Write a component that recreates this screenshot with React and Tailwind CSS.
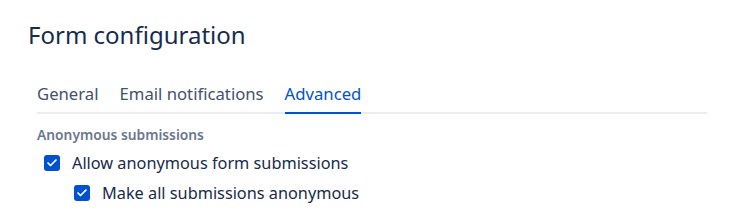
import { Check } from 'lucide-react';

const tabs = ['General', 'Email notifications', 'Advanced'];

const Checkbox = ({ label, className = '' }) => (
  <label className={`flex items-center h-[30px] ${className}`}>
    <span className="flex items-center justify-center w-4 h-4 rounded-[3px] bg-[#0052cc]">
      <Check size={12} strokeWidth={3.5} className="text-white" />
    </span>
    <span className="ml-[12px] text-[16.3px] text-[#172b4d]">{label}</span>
  </label>
);

const App = () => {
  return (
    <div className="w-[737px] h-[214px] bg-white pl-[28px] pt-[19px] font-['Noto_Sans',sans-serif]">
      <h1 className="text-[24px] leading-[32px] text-[#172b4d]">Form configuration</h1>

      <div className="ml-[9px] mt-[31px] w-[670px] border-b-2 border-[#ebecf0] flex gap-[21px]">
        {tabs.map((t, i) => (
          <div
            key={t}
            className={`relative pb-[6px] text-[16.7px] leading-[24px] ${
              i === 2 ? 'text-[#0052cc]' : 'text-[#42526e]'
            }`}
          >
            {t}
            {i === 2 && <span className="absolute left-0 right-0 -bottom-[2px] h-[2px] bg-[#0052cc]" />}
          </div>
        ))}
      </div>

      <div className="ml-[9px] mt-[12px]">
        <div className="text-[13.8px] leading-[18px] font-semibold text-[#6b778c]">Anonymous submissions</div>
        <div className="mt-[4px] pl-[7px]">
          <Checkbox label="Allow anonymous form submissions" />
          <Checkbox label="Make all submissions anonymous" className="pl-[30px]" />
        </div>
      </div>
    </div>
  );
};

export default App;
